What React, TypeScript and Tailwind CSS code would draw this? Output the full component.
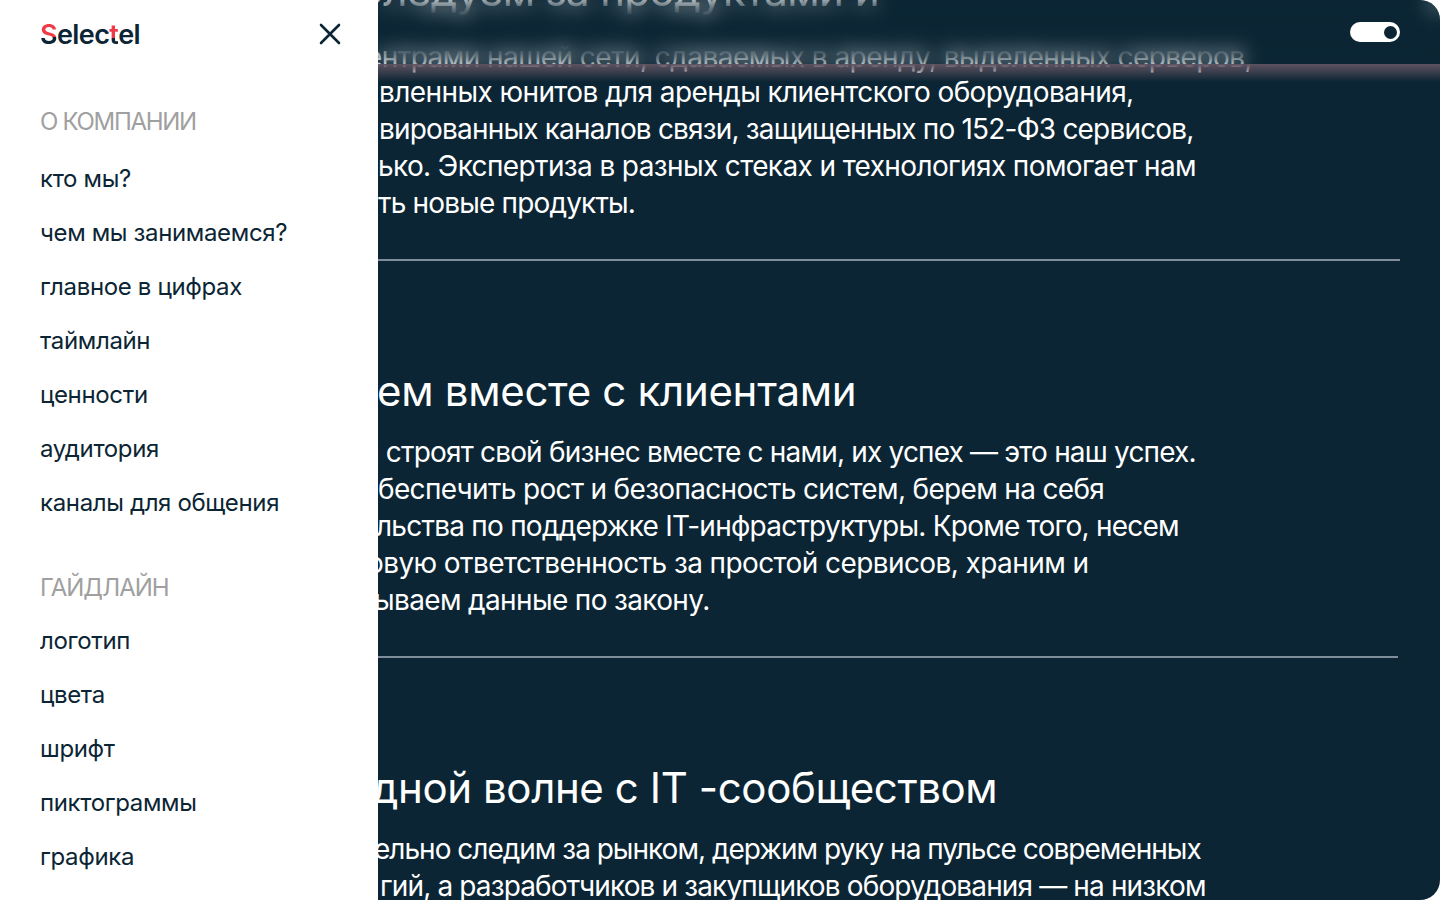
import React from 'react';

const firstGroup = ['кто мы?', 'чем мы занимаемся?', 'главное в цифрах', 'таймлайн', 'ценности', 'аудитория', 'каналы для общения'];
const secondGroup = ['логотип', 'цвета', 'шрифт', 'пиктограммы', 'графика'];

const Line = ({ children, className = '' }: { children: React.ReactNode; className?: string }) => (
  <p className={`h-[37px] whitespace-nowrap text-[28px] leading-[37px] text-white ${className}`}>{children}</p>
);

const Heading = ({ children, className = '' }: { children: React.ReactNode; className?: string }) => (
  <h2 className={`h-[60px] whitespace-nowrap text-[42px] leading-[60px] text-white ${className}`}>{children}</h2>
);

const Divider = ({ className = '' }: { className?: string }) => <div className={`h-[2px] bg-[#7e8e98] ${className}`} />;

export default function App() {
  return (
    <div className="relative h-[900px] w-[1440px] overflow-hidden bg-white font-['Inter',sans-serif]">
      <main className="relative ml-[378px] h-full overflow-hidden rounded-r-[20px] bg-[#0b2534]">
        <div className="-mt-[39px]">
          <Heading className="-ml-[25px] tracking-[-0.55px]">Следуем за продуктами и</Heading>
          <div className="h-[53px] pt-[18px]">
            <Line className="-ml-[12px] tracking-[-0.55px]">ентрами нашей сети, сдаваемых в аренду, выделенных серверов,</Line>
          </div>
          <Line className="ml-[1px] tracking-[-0.59px]">вленных юнитов для аренды клиентского оборудования,</Line>
          <Line className="ml-[1px] tracking-[-0.82px]">вированных каналов связи, защищенных по 152-ФЗ сервисов,</Line>
          <Line className="tracking-[-0.62px]">ько. Экспертиза в разных стеках и технологиях помогает нам</Line>
          <Line className="tracking-[-0.83px]">ть новые продукты.</Line>
          <Divider className="mt-[37px] mr-[40px]" />
          <Heading className="-ml-[1px] mt-[100px] tracking-[-0.3px]">ем вместе с клиентами</Heading>
          <Line className="mt-[13px] -ml-[19px] tracking-[-0.82px]">ы строят свой бизнес вместе с нами, их успех — это наш успех.</Line>
          <Line className="tracking-[-0.67px]">беспечить рост и безопасность систем, берем на себя</Line>
          <Line className="-ml-[2px] tracking-[-0.76px]">льства по поддержке IT-инфраструктуры. Кроме того, несем</Line>
          <Line className="-ml-[11px] tracking-[-0.59px]">овую ответственность за простой сервисов, храним и</Line>
          <Line className="-ml-[4px] tracking-[-0.64px]">ываем данные по закону.</Line>
          <Divider className="mt-[37px] mr-[42px]" />
          <Heading className="-ml-[6px] mt-[100px] tracking-[-0.4px]">дной волне с IT -сообществом</Heading>
          <Line className="mt-[13px] -ml-[4px] tracking-[-1px]">ельно следим за рынком, держим руку на пульсе современных</Line>
          <Line className="ml-[2px] tracking-[-0.86px]">гий, а разработчиков и закупщиков оборудования — на низком</Line>
        </div>

        <header className="absolute inset-x-0 top-0 flex h-[64px] items-center justify-end pr-[40px] backdrop-blur-[10px]">
          <div className="flex h-[20px] w-[50px] items-center justify-end rounded-full bg-white pr-[3px]">
            <span className="h-[13px] w-[13px] rounded-full bg-[#0b2534]" />
          </div>
        </header>
        <div className="absolute inset-x-0 top-[64px] h-[18px] bg-gradient-to-b from-[#5d5260] to-transparent" />
      </main>

      <aside className="absolute inset-y-0 left-0 w-[378px] bg-white pl-[40px] pr-[36px] text-[#0b2534]">
        <div className="flex h-[68px] items-center justify-between">
          <span className="mt-[2px] flex text-[27px] font-semibold leading-[32px] tracking-[-0.6px]">
            <span className="bg-[linear-gradient(180deg,#ee3a46_0%,#ee3a46_56%,#0b2534_56%,#0b2534_100%)] bg-clip-text text-transparent">S</span>
            <span>elec</span>
            <span className="bg-[linear-gradient(180deg,#ee3a46_0%,#ee3a46_58%,#0b2534_58%,#0b2534_100%)] bg-clip-text text-transparent">t</span>
            <span>el</span>
          </span>
          <svg width="24" height="24" viewBox="0 0 24 24" fill="none" stroke="#0b2534" strokeWidth="2.6" strokeLinecap="round">
            <path d="M3 3 21 21M21 3 3 21" />
          </svg>
        </div>

        <h3 className="mt-[36px] h-[36px] text-[24px] leading-[36px] tracking-[-1.3px] text-[#a0a0a0]">О КОМПАНИИ</h3>
        <ul className="mt-[21px]">
          {firstGroup.map((item) => (
            <li key={item} className="h-[54px] text-[24px] leading-[36px] tracking-[-0.35px]">{item}</li>
          ))}
        </ul>
        <h3 className="mt-[31px] h-[36px] text-[24px] leading-[36px] tracking-[-1.1px] text-[#a0a0a0]">ГАЙДЛАЙН</h3>
        <ul className="mt-[17px]">
          {secondGroup.map((item) => (
            <li key={item} className="h-[54px] text-[24px] leading-[36px] tracking-[-0.35px]">{item}</li>
          ))}
        </ul>
      </aside>
    </div>
  );
}
